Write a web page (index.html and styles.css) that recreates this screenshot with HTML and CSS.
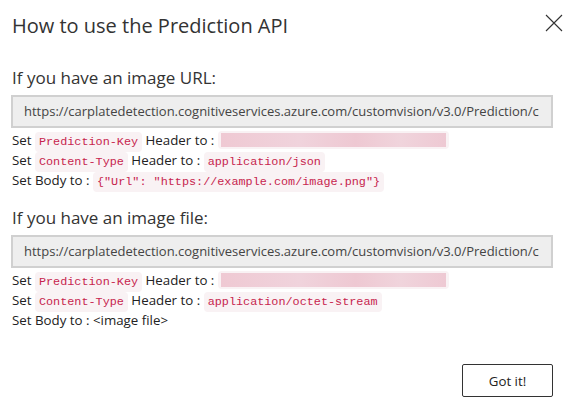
FILE: index.html
```html
<!DOCTYPE html>
<html lang="en">
<head>
<meta charset="utf-8">
<title>How to use the Prediction API</title>
<link rel="stylesheet" href="styles.css">
</head>
<body>
<div class="dialog">
  <div class="header">
    <h1 class="title">How to use the Prediction API</h1>
    <button class="close" aria-label="Close">
      <svg width="18" height="18" viewBox="0 0 18 18"><path d="M1 1L17 17M17 1L1 17" stroke="#333" stroke-width="1.1" fill="none"/></svg>
    </button>
  </div>

  <section class="section">
    <h2 class="subtitle">If you have an image URL:</h2>
    <div class="url"><span class="url-text">https://carplatedetection.cognitiveservices.azure.com/customvision/v3.0/Prediction/cdc1a2b3-0000-0000-0000-000000000000/classify/iterations/Iteration1/url</span></div>
    <div class="row">Set <code>Prediction-Key</code> Header to : <code class="key"><span class="blur"></span></code></div>
    <div class="row">Set <code>Content-Type</code> Header to : <code>application/json</code></div>
    <div class="row">Set Body to : <code>{"Url": "https://example.com/image.png"}</code></div>
  </section>

  <section class="section">
    <h2 class="subtitle">If you have an image file:</h2>
    <div class="url"><span class="url-text">https://carplatedetection.cognitiveservices.azure.com/customvision/v3.0/Prediction/cdc1a2b3-0000-0000-0000-000000000000/classify/iterations/Iteration1/image</span></div>
    <div class="row">Set <code>Prediction-Key</code> Header to : <code class="key"><span class="blur"></span></code></div>
    <div class="row">Set <code>Content-Type</code> Header to : <code>application/octet-stream</code></div>
    <div class="row">Set Body to : &lt;image file&gt;</div>
  </section>

  <div class="footer">
    <button class="btn">Got it!</button>
  </div>
</div>
</body>
</html>
```

FILE: styles.css
```css
html, body {
  margin: 0;
  padding: 0;
  background: #fff;
}
body {
  font-family: "Open Sans", "Noto Sans", sans-serif;
  color: #333;
}
.dialog {
  width: 568px;
  height: 408px;
  box-sizing: border-box;
  padding: 0 15px 0 11px;
  display: flex;
  flex-direction: column;
}
.header {
  display: flex;
  justify-content: space-between;
  align-items: flex-start;
  padding-top: 12px;
}
.title {
  margin: 0 0 0 1px;
  font-size: 20px;
  font-weight: 400;
  line-height: 28px;
  color: #333;
}
.close {
  border: 0;
  background: none;
  padding: 0;
  margin: 2px -10px 0 0;
  width: 18px;
  height: 18px;
  cursor: pointer;
}
.close svg { display: block; }
.section {
  margin-top: 25px;
}
.section + .section {
  margin-top: 15px;
}
.subtitle {
  margin: 0 0 0 1px;
  font-size: 17px;
  font-weight: 400;
  line-height: 26px;
  color: #333;
}
.url {
  margin-top: 4px;
  height: 33px;
  box-sizing: border-box;
  border: 2px solid #d0d0d0;
  background: #eeeeee;
  padding: 0 12px 0 11px;
  font-size: 13px;
  line-height: 29px;
  color: #444;
  width: 542px;
}
.url-text {
  display: block;
  white-space: nowrap;
  overflow: hidden;
}
.row {
  font-size: 13.3px;
  line-height: 20px;
  height: 20px;
  padding-left: 1px;
  color: #222;
  white-space: nowrap;
}
.url + .row { margin-top: 2px; }
code {
  font-family: "Liberation Mono", "DejaVu Sans Mono", monospace;
  font-size: 11.8px;
  color: #c7254e;
  background: #f9f2f4;
  border-radius: 4px;
  padding: 3px 4px;
}
.key {
  display: inline-block;
  vertical-align: top;
  margin-top: 1px;
  padding: 2px 3px;
  line-height: 0;
}
.blur {
  display: inline-block;
  width: 225px;
  height: 14px;
  background: linear-gradient(90deg, #efc9d3 0%, #f0d3dc 35%, #eec8d2 60%, #f0d4dc 80%, #eec9d3 100%);
}
.footer {
  margin-top: auto;
  display: flex;
  justify-content: flex-end;
  padding-bottom: 11px;
}
.btn {
  width: 91px;
  height: 33px;
  box-sizing: border-box;
  border: 1px solid #333;
  border-radius: 2px;
  background: #fff;
  font-family: "Open Sans", "Noto Sans", sans-serif;
  font-size: 13.3px;
  color: #222;
  padding: 0;
}
```
